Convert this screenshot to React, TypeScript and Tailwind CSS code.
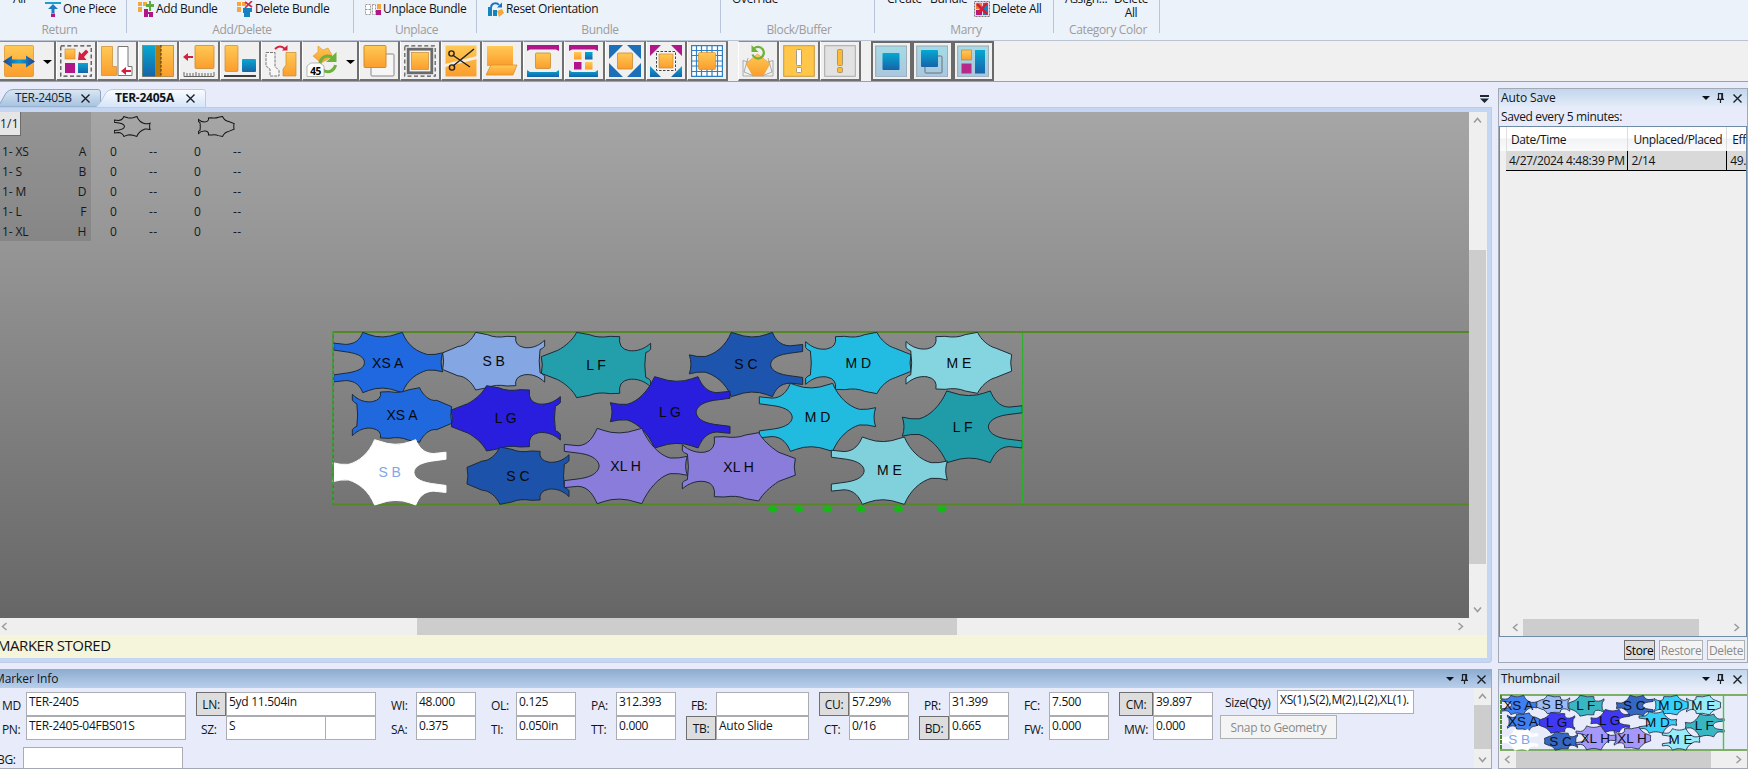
import React from "react";

type Piece = {
  kind: "front" | "back";
  x1: number;
  x2: number;
  y1: number;
  y2: number;
  flip?: boolean;
  label: string;
  fill: string;
  thumb: string;
  text?: string;
  tx: number;
  ty: number;
};

const pieces: Piece[] = [
  { kind: "front", x1: 41, x2: 368, y1: 37, y2: 218, label: "XS A", fill: "#1f68e0", thumb: "#3f7ff0", tx: 203, ty: 129 },
  { kind: "back", x1: 368, x2: 674, y1: 37, y2: 210, flip: true, label: "S B", fill: "#84a6e2", thumb: "#9bbcf8", tx: 521, ty: 123 },
  { kind: "back", x1: 664, x2: 992, y1: 37, y2: 233, flip: true, label: "L F", fill: "#229fab", thumb: "#38b6c2", tx: 828, ty: 135 },
  { kind: "front", x1: 1108, x2: 1448, y1: 37, y2: 230, flip: true, label: "S C", fill: "#1d54ae", thumb: "#3568c4", tx: 1278, ty: 132 },
  { kind: "back", x1: 1457, x2: 1773, y1: 37, y2: 221, label: "M D", fill: "#22bce2", thumb: "#36d0f8", tx: 1615, ty: 129 },
  { kind: "back", x1: 1758, x2: 2075, y1: 37, y2: 220, label: "M E", fill: "#84d5e0", thumb: "#96ecf8", tx: 1917, ty: 129 },
  { kind: "front", x1: 1318, x2: 1667, y1: 190, y2: 394, label: "M D", fill: "#22bbe0", thumb: "#36d0f8", tx: 1493, ty: 291 },
  { kind: "front", x1: 871, x2: 1230, y1: 170, y2: 384, flip: true, label: "L G", fill: "#2a1ede", thumb: "#4038f5", tx: 1050, ty: 276 },
  { kind: "back", x1: 97, x2: 395, y1: 203, y2: 367, label: "XS A", fill: "#1f68de", thumb: "#3f7ff0", tx: 246, ty: 286 },
  { kind: "back", x1: 394, x2: 721, y1: 197, y2: 393, flip: true, label: "L G", fill: "#2a1ede", thumb: "#4038f5", tx: 557, ty: 295 },
  { kind: "front", x1: 1747, x2: 2107, y1: 213, y2: 428, flip: true, label: "L F", fill: "#209ca8", thumb: "#38b6c2", tx: 1928, ty: 321 },
  { kind: "back", x1: 441, x2: 747, y1: 381, y2: 553, flip: true, label: "S C", fill: "#1c52aa", thumb: "#3568c4", tx: 594, ty: 468 },
  { kind: "front", x1: 733, x2: 1102, y1: 325, y2: 551, label: "XL H", fill: "#8a7cda", thumb: "#a598fa", tx: 917, ty: 438 },
  { kind: "back", x1: 1087, x2: 1426, y1: 338, y2: 543, label: "XL H", fill: "#8a7cda", thumb: "#a598fa", tx: 1256, ty: 441 },
  { kind: "front", x1: 1534, x2: 1882, y1: 351, y2: 553, label: "M E", fill: "#80d1dc", thumb: "#96ecf8", tx: 1708, ty: 450 },
  { kind: "front", x1: 38, x2: 378, y1: 359, y2: 555, flip: true, label: "S B", fill: "#ffffff", thumb: "#ffffff", text: "#7fa6ea", tx: 209, ty: 456 },
];

function outline(p: Piece): string {
  const w = p.x2 - p.x1;
  const h = (p.y2 - p.y1) / 2;
  const cy = (p.y1 + p.y2) / 2;
  const at = (fx: number, dy: number) => {
    const x = p.flip ? p.x2 - fx * w : p.x1 + fx * w;
    return `${x.toFixed(1)} ${(cy + dy).toFixed(1)}`;
  };
  if (p.kind === "front") {
    const o = 58 + (h - 90) * 0.3;
    const i = o - 21;
    return [
      `M${at(0, -o)}`,
      `L${at(0.11, -o + 4)} C${at(0.2, -o + 3)} ${at(0.24, -h + 22)} ${at(0.267, -h)}`,
      `Q${at(0.32, -h + 7)} ${at(0.38, -h + 12)} Q${at(0.45, -h + 16)} ${at(0.52, -h + 11)} L${at(0.63, -h)}`,
      `C${at(0.68, -h + 42)} ${at(0.77, -32)} ${at(0.86, -24)} Q${at(0.93, -22)} ${at(1, -29)}`,
      `Q${at(0.972, 0)} ${at(1, 28)} Q${at(0.93, 21)} ${at(0.86, 23)}`,
      `C${at(0.77, 32)} ${at(0.68, h - 42)} ${at(0.63, h)}`,
      `L${at(0.52, h - 11)} Q${at(0.45, h - 16)} ${at(0.38, h - 12)} Q${at(0.32, h - 7)} ${at(0.267, h)}`,
      `C${at(0.24, h - 22)} ${at(0.2, o - 3)} ${at(0.11, o - 4)} L${at(0, o)} L${at(0, i)}`,
      `L${at(0.13, i - 6)} C${at(0.24, i - 12)} ${at(0.28, 15)} ${at(0.283, 0)}`,
      `C${at(0.28, -15)} ${at(0.24, -i + 12)} ${at(0.13, -i + 6)} L${at(0, -i)} Z`,
    ].join(" ");
  }
  const t = 64 + (h - 92) * 0.2;
  const c = h - 13;
  return [
    `M${at(0, -t)}`,
    `C${at(0.06, -t + 18)} ${at(0.13, -t + 25)} ${at(0.2, -t + 22)} Q${at(0.3, -t + 16)} ${at(0.283, -c)}`,
    `L${at(0.37, -c - 1)} Q${at(0.48, -c + 5)} ${at(0.56, -h + 7)} L${at(0.677, -h)}`,
    `C${at(0.71, -h + 22)} ${at(0.78, -h + 42)} ${at(0.85, -44)} L${at(1, -25)}`,
    `Q${at(0.982, 0)} ${at(1, 25)} L${at(0.85, 44)} C${at(0.78, h - 42)} ${at(0.71, h - 22)} ${at(0.677, h)}`,
    `L${at(0.56, h - 7)} Q${at(0.48, c - 5)} ${at(0.37, c + 1)} L${at(0.283, c)}`,
    `Q${at(0.3, t - 16)} ${at(0.2, t - 22)} C${at(0.13, t - 25)} ${at(0.06, t - 18)} ${at(0, t)}`,
    `L${at(0, t - 18)} Q${at(0.02, t - 26)} ${at(0.045, t - 28)} Q${at(0.062, 0)} ${at(0.045, -t + 28)}`,
    `Q${at(0.02, -t + 26)} ${at(0, -t + 18)} Z`,
  ].join(" ");
}

const ticks = [1358, 1436, 1522, 1622, 1735, 1865];

function Marker() {
  return (
    <svg className="block h-[506px] w-[1469px]" viewBox="0 0 1469 506">
      <g transform="translate(320 208) scale(0.33333)">
        <path d="M38 36H3500M38 553.5H3500" stroke="#558725" strokeWidth="6" />
        {pieces.map((p, i) => (
          <path key={i} d={outline(p)} fill={p.fill} stroke={p.text ? "#ffffff" : "#1b2733"} strokeWidth="2.9" />
        ))}
        <path d="M39.5 36V553" stroke="#4a7a28" strokeWidth="4" />
        <path d="M39.5 36V553" stroke="#2bb02b" strokeWidth="5" strokeDasharray="10 8" />
        <path d="M2108 38V553" stroke="#1dbb1d" strokeWidth="3" />
        {ticks.map((x) => (
          <path key={x} d={`M${x - 16} 567l8 -8h6v-4h5v4h6l8 8l-8 8h-5v3h-6v-3h-6z`} fill="#16b816" />
        ))}
        {pieces.map((p, i) => (
          <text key={i} x={p.tx} y={p.ty + 15} textAnchor="middle" fontSize="42" fill={p.text ?? "#06080c"} className="font-['Liberation_Sans',sans-serif] tracking-normal">
            {p.label}
          </text>
        ))}
      </g>
    </svg>
  );
}

function Thumbnail() {
  return (
    <svg className="block h-[57px] w-[247px]" viewBox="0 0 247 57">
      <path d="M0 1H247M0 56H247" stroke="#5b9a35" strokeWidth="1.400" />
      <g transform="translate(-3 -2.6) scale(0.1078 0.1062)">
        {pieces.map((p, i) => (
          <path key={i} d={outline(p)} fill={p.thumb} stroke={p.text ? "#ffffff" : "#223046"} strokeWidth="8" />
        ))}
      </g>
      <path d="M1 1V56" stroke="#4b8a2b" strokeWidth="2" strokeDasharray="4 1" />
      <path d="M223.5 1V56" stroke="#3ecb3e" strokeWidth="1.400" />
      {pieces.map((p, i) => (
        <text key={i} x={p.tx * 0.1078 - 3.5} y={p.ty * 0.1062 + 2} textAnchor="middle" fontSize="13.500" fill={p.text ?? "#0a0f1c"} className="font-['Liberation_Sans',sans-serif] tracking-normal">
          {p.label}
        </text>
      ))}
    </svg>
  );
}

const G = "url(#gold)";
const B = "url(#teal)";
const P = "#b0168a";

const icons: Record<string, React.ReactNode> = {
  spread: (
    <>
      <rect x="1.500" y=".5" width="29" height="31" rx="1" fill={G} stroke="#d98f2b" strokeWidth=".7" />
      <path d="M0 16.500l9-6v4h14v-4l9 6-9 6v-4H9v4z" fill="url(#arrow)" />
    </>
  ),
  gather: (
    <>
      <rect x=".8" y=".8" width="30.400" height="30.400" fill="none" stroke="#444" strokeWidth="1.200" strokeDasharray="4 2.500" />
      <rect x="5" y="4" width="10" height="10" fill={G} stroke="#c98a30" strokeWidth=".6" />
      <rect x="5" y="18" width="10" height="10" fill={P} />
      <rect x="18" y="18" width="10" height="10" fill={B} />
      <path d="M26 4.500l-4.500 4.500-2.500-2.500-1 8.500h8.500l-2.500-3 4.500-5z" fill="#d3203f" />
    </>
  ),
  join: (
    <>
      <path d="M.5 1.500h11v20h4v9H.5z" fill={G} stroke="#c98a30" strokeWidth=".7" />
      <path d="M17 1.500h10v20h4v9H17z" fill="#fff" stroke="#777" />
      <path d="M20 26l5-4v3h5v2h-5v3z" fill="#d3203f" />
    </>
  ),
  fold: (
    <>
      <rect x=".5" y=".5" width="31" height="31" fill={G} stroke="#a77a35" strokeWidth=".7" />
      <rect x=".5" y=".5" width="13" height="31" fill={B} />
      <rect x="13.500" y=".5" width="5.500" height="31" fill="#b97a08" />
      <path d="M19 0v32" stroke="#333" strokeDasharray="2.500 1.500" />
    </>
  ),
  measure: (
    <>
      <rect x="12" y=".5" width="19" height="23" rx="1" fill={G} stroke="#c98a30" strokeWidth=".8" />
      <path d="M0 12l5-4v3h5v2H5v3z" fill="#d3203f" />
      <path d="M1 27v4.500h30V27M4 28v3M7 28v3M10 28v3M13 27v4M16 28v3M19 28v3M22 28v3M25 28v3M28 28v3" fill="none" stroke="#555" strokeWidth=".9" />
    </>
  ),
  align: (
    <>
      <rect x="1" y=".5" width="13" height="26" rx="1" fill={G} stroke="#c98a30" strokeWidth=".7" />
      <rect x="18" y="14" width="14" height="13" rx="1" fill={B} />
      <path d="M0 31h32" stroke="#111" strokeWidth="1.600" />
    </>
  ),
  flip: (
    <>
      <path d="M1 7.500h9v14l4 4v5.500H5v-7l-4-3z" fill="#f7f7f7" stroke="#777" strokeDasharray="3 1" />
      <path d="M21 7.500h10v23.500H18v-7l3-4z" fill={G} stroke="#c98a30" strokeWidth=".7" />
      <path d="M10 4q5-5 10 0" fill="none" stroke="#d3203f" strokeWidth="2" />
      <path d="M17 5.500h5.500V0z" fill="#d3203f" />
    </>
  ),
  rotate: (
    <>
      <path d="M12 1l5 4 5-2 4 7-4 4-7 4-8-7 5-4z" fill={G} stroke="#d9932f" strokeWidth=".6" />
      <path d="M27.500 13.500A7.800 7.800 0 1 0 29.500 20" fill="none" stroke="#6fb23b" strokeWidth="3" />
      <path d="M20 17h10.500V7z" fill="#6fb23b" />
      <path d="M1 21l4-3h9l4 3v10.500H1z" fill="#fff" stroke="#999" strokeWidth=".7" />
      <text x="9.500" y="30" textAnchor="middle" fontSize="10" fontWeight="700" className="font-['Open_Sans',sans-serif]">45</text>
    </>
  ),
  layers: (
    <>
      <rect x="8" y="9" width="23" height="22" rx="1" fill="#f6f6f6" stroke="#888" />
      <rect x="1" y=".5" width="22" height="22" rx="1" fill={G} stroke="#d18c2c" />
    </>
  ),
  block: (
    <>
      <rect x=".8" y=".8" width="30.400" height="30.400" fill="none" stroke="#555" strokeWidth="1.200" strokeDasharray="4 2.500" />
      <rect x="4.200" y="4.200" width="23.600" height="23.600" fill="#f4f4f4" stroke="#6a6a6a" strokeWidth="2.800" />
      <rect x="7.500" y="7.500" width="17" height="17" fill={G} stroke="#c98a30" strokeWidth=".7" />
    </>
  ),
  cut: (
    <>
      <rect x=".5" y=".5" width="31" height="31" fill={G} />
      <path d="M0 19L32 11V14L0 22z" fill="#f7efe2" />
      <path d="M8 21L29 4M7.500 10L25 22" stroke="#222" strokeWidth="1.500" />
      <circle cx="6.500" cy="8.500" r="2.600" fill="none" stroke="#222" strokeWidth="1.400" />
      <circle cx="7" cy="22.500" r="2.600" fill="none" stroke="#222" strokeWidth="1.400" />
    </>
  ),
  tray: (
    <>
      <rect x="1" y="1" width="26" height="20" fill={G} />
      <path d="M5 20h26l-4 10H0z" fill={G} stroke="#d98f2b" strokeWidth=".8" />
    </>
  ),
  stack: (
    <>
      <path d="M0 0h32v6l-3-1.500H3L0 6z" fill={P} />
      <rect x="8.500" y="8" width="15" height="15.500" rx="1" fill={G} stroke="#c98a30" strokeWidth=".8" />
      <path d="M0 32h32v-7l-3 2H3l-3-2z" fill={B} />
    </>
  ),
  stackFour: (
    <>
      <path d="M1 0h29v6l-3-1.500H4L1 6z" fill={P} />
      <path d="M1 32h29v-7l-3 2H4l-3-2z" fill={B} />
      <rect x="6" y="7" width="7.500" height="7.500" fill={G} />
      <rect x="17" y="7" width="7.500" height="7.500" fill={B} />
      <rect x="6" y="17" width="7.500" height="7.500" fill={P} />
      <rect x="17" y="17" width="7.500" height="7.500" fill={G} />
    </>
  ),
  corners: (
    <>
      <path d="M0 0h14L0 14zM32 0v14L18 0zM0 32V18l14 14zM32 32H18l14-14z" fill="#1d6fb8" />
      <rect x="8.500" y="8" width="15" height="16" rx="1" fill={G} stroke="#c98a30" strokeWidth=".8" />
    </>
  ),
  cornersBlock: (
    <>
      <path d="M0 0h11L0 11zM32 0v11L21 0z" fill={P} />
      <path d="M0 32V21l11 11zM32 32H21l11-11z" fill={B} />
      <rect x="6.500" y="6.500" width="19" height="19" fill="#f4f4f4" stroke="#444" strokeDasharray="2.500 1.500" />
      <rect x="9" y="9" width="14" height="14" fill={G} stroke="#c98a30" strokeWidth=".7" />
    </>
  ),
  grid: (
    <>
      <path d="M.6 .6H31.400V31.400H.6zM5.500 0v32M10.500 0v32M16 0v32M21 0v32M26.500 0v32M0 5.500h32M0 10.500h32M0 16h32M0 21h32M0 26.500h32" fill="#fff" stroke="#2f7fc4" strokeWidth="1.200" />
      <rect x="7.500" y="7.500" width="17" height="17" rx="1" fill={G} stroke="#d98f2b" strokeWidth=".7" />
    </>
  ),
  renew: (
    <>
      <path d="M1 15.500l5 1.500M31 15.500l-5 1.500M1 15.500V31h30V15.500M6 13L2 27l10 4M26 13l4 14-10 4" fill="none" stroke="#999" strokeWidth=".8" />
      <path d="M15.500 9L4 18.500 11 31h10l7-12.500z" fill={G} stroke="#e09a33" strokeWidth=".6" />
      <path d="M12 3.500a5.800 5.800 0 1 1-1.500 6" fill="none" stroke="#6fb23b" strokeWidth="2.300" />
      <path d="M9.500 0v7h7z" fill="#6fb23b" />
    </>
  ),
  alert: (
    <>
      <rect x=".7" y=".7" width="30.600" height="30.600" fill="#ffc64a" stroke="#c99a3c" />
      <rect x="13.500" y="4.500" width="5" height="16" rx="1" fill="#fff" stroke="#8a8a8a" strokeWidth=".8" />
      <rect x="13.500" y="22.500" width="5" height="5" rx="1" fill="#fff" stroke="#8a8a8a" strokeWidth=".8" />
    </>
  ),
  alertOff: (
    <>
      <rect x=".7" y=".7" width="30.600" height="30.600" fill="#e2e2e2" stroke="#a8a8a8" />
      <rect x="13.500" y="4.500" width="5" height="16" rx="1" fill="#fdbb35" stroke="#9a8a6a" strokeWidth=".8" />
      <rect x="13.500" y="22.500" width="5" height="5" rx="1" fill="#fdbb35" stroke="#9a8a6a" strokeWidth=".8" />
    </>
  ),
  solid: (
    <>
      <rect x=".7" y="1" width="31" height="31" fill="url(#ice)" stroke="#9aa3aa" />
      <rect x="7.500" y="8" width="17" height="17" rx="1" fill={B} />
    </>
  ),
  overlap: (
    <>
      <rect x=".7" y="1" width="31" height="31" fill="url(#ice)" stroke="#9aa3aa" />
      <rect x="9" y="11" width="17" height="17" rx="1" fill="none" stroke="#66707a" />
      <rect x="5" y="5" width="17" height="17" rx="1" fill={B} />
    </>
  ),
  mixed: (
    <>
      <rect x=".7" y="1" width="31" height="31" fill="url(#ice)" stroke="#9aa3aa" />
      <rect x="4.500" y="5" width="10" height="10" fill={G} stroke="#a78a50" strokeWidth=".7" />
      <rect x="4.500" y="18.500" width="10" height="10" fill="#b52a88" />
      <rect x="18" y="5" width="10" height="23.500" fill={B} />
    </>
  ),
};

function Defs() {
  return (
    <svg className="absolute h-0 w-0">
      <defs>
        <linearGradient id="gold" x1="0" y1="0" x2="0" y2="1">
          <stop offset="0" stopColor="#ffc955" />
          <stop offset="1" stopColor="#fb9d2c" />
        </linearGradient>
        <linearGradient id="teal" x1="0" y1="0" x2="0" y2="1">
          <stop offset="0" stopColor="#06a8d2" />
          <stop offset="1" stopColor="#1763a8" />
        </linearGradient>
        <linearGradient id="arrow" x1="0" y1="0" x2="1" y2="0">
          <stop offset="0" stopColor="#1f3f93" />
          <stop offset=".5" stopColor="#109fd0" />
          <stop offset="1" stopColor="#1f3f93" />
        </linearGradient>
        <linearGradient id="ice" x1="0" y1="0" x2="0" y2="1">
          <stop offset="0" stopColor="#a6dbe6" />
          <stop offset="1" stopColor="#aac6de" />
        </linearGradient>
      </defs>
    </svg>
  );
}

function Tool({ name, menu, on }: { name: string; menu?: boolean; on?: boolean }) {
  return (
    <div
      className={
        (menu ? "w-[57px] " : "w-[41px] ") +
        (on ? "border-2 border-[#6a6a6a] pl-[2px] pt-[2px] " : "border-b-2 border-l border-r-2 border-t border-b-[#707070] border-l-[#fff] border-r-[#707070] border-t-[#8c8c8c] pl-[3px] pt-[3px] ") +
        "flex h-[40px] shrink-0 items-start bg-[#f0f0f0]"
      }
    >
      <svg className="h-8 w-8 shrink-0" viewBox="0 0 32 32">{icons[name]}</svg>
      {menu && (
        <svg className="ml-[8px] mt-[15px] h-1 w-[9px]" viewBox="0 0 9 4">
          <path d="M0 0h9L4.500 4z" />
        </svg>
      )}
    </div>
  );
}

function Group({ width, label, labelClass = "", children }: { width: string; label: string; labelClass?: string; children?: React.ReactNode }) {
  return (
    <div className={`${width} h-[33px] shrink-0 border-r border-[#b9c6da]`}>
      <div className="flex h-[18px] items-center whitespace-nowrap">{children}</div>
      <div className={`pt-[2px] text-center leading-[20px] text-[#9c9c9c] ${labelClass}`}>{label}</div>
    </div>
  );
}

function Glyph({ kind }: { kind: "up" | "add" | "del" | "unplace" | "reset" | "delAll" }) {
  return (
    <svg className="h-4 w-4 shrink-0" viewBox="0 0 16 16">
      {kind === "up" && (
        <>
          <path d="M0 1h16v2H0z" fill="#1c9fd0" />
          <path d="M8 3l5 5h-3.500v4h-3V8H3z" fill="#1d7cc0" />
          <path d="M6 12.500h4V16H6z" fill={P} />
        </>
      )}
      {kind === "add" && (
        <>
          <path d="M0 1h4v4H0zM5 1h4v4H5zM0 6h4v5H0z" fill="#f6a738" />
          <path d="M6 8h4v3h5v5h-4v-3h-1v3H6z" fill={P} />
          <path d="M11 0h2v3h3v3h-3v4h-2V6H8V3h3z" fill="#5cad3f" />
        </>
      )}
      {kind === "del" && (
        <>
          <path d="M0 1h4v4H0zM5 1h4v4H5zM0 6h4v5H0z" fill="#f6a738" />
          <path d="M6 7h9v4h-2v5H7v-4H6z" fill="#1583bd" />
          <path d="M8 1l7 5M15 0L8 7" stroke="#d8263c" strokeWidth="1.700" />
        </>
      )}
      {kind === "unplace" && (
        <>
          <path d="M.5 3.500h5v10h-5zM7.500 3.500h3v10h-3zM.5 8.500h5" fill="#fff" stroke="#999" strokeDasharray="2 1" />
          <path d="M12 3h4v5h-4z" fill="#f6a738" />
          <path d="M11 9h5v5h-5z" fill={P} />
        </>
      )}
      {kind === "reset" && (
        <>
          <path d="M0 6h4v9H0zM5 9h4v6H5z" fill="#1583bd" />
          <path d="M3 6a4.500 4.500 0 0 1 8-2" stroke="#1b74bb" strokeWidth="2" fill="none" />
          <path d="M9 6.500h5V1.500z" fill="#1b74bb" />
          <path d="M9 10l5-2 2 4-5 4z" fill="#f6a738" />
        </>
      )}
      {kind === "delAll" && (
        <>
          <rect x=".5" y=".5" width="15" height="15" fill="#e7d7e8" stroke="#777" strokeDasharray="2 1" />
          <path d="M2 2h6v6H2z" fill="#f07d35" />
          <path d="M9 2h5v12H9z" fill="#1583bd" />
          <path d="M2 9h6v5H2z" fill={P} />
          <path d="M3 3l10 10M13 2L3 13" stroke="#d11f38" strokeWidth="2.600" />
        </>
      )}
    </svg>
  );
}

function Ribbon() {
  return (
    <div className="flex h-[41px] w-[1748px] overflow-hidden border-b border-[#b9c3d3] bg-[#ecf2fa]">
      <Group width="w-[127px]" label="Return" labelClass="pr-[7px]">
        <span className="-mt-[20px] ml-[13px] w-[32px]">All</span>
        <Glyph kind="up" />
        <span className="ml-[2px]">One Piece</span>
      </Group>
      <Group width="w-[227px]" label="Add/Delete" labelClass="pl-[4px]">
        <span className="ml-[11px] flex"><Glyph kind="add" /></span>
        <span className="ml-[2px] w-[81px]">Add Bundle</span>
        <Glyph kind="del" />
        <span className="ml-[2px]">Delete Bundle</span>
      </Group>
      <Group width="w-[123px]" label="Unplace" labelClass="pl-[3px]">
        <span className="ml-[11px] flex"><Glyph kind="unplace" /></span>
        <span className="ml-[2px]">Unplace Bundle</span>
      </Group>
      <Group width="w-[244px]" label="Bundle" labelClass="pl-[3px]">
        <span className="ml-[11px] flex"><Glyph kind="reset" /></span>
        <span className="ml-[2px]">Reset Orientation</span>
      </Group>
      <Group width="w-[154px]" label="Block/Buffer" labelClass="pl-[3px]">
        <span className="-mt-[20px] ml-[11px]">Override</span>
      </Group>
      <Group width="w-[179px]" label="Marry" labelClass="pl-[4px]">
        <span className="-mt-[20px] ml-[12px] w-[43px]">Create</span>
        <span className="-mt-[20px] w-[44px]">Bundle</span>
        <Glyph kind="delAll" />
        <span className="ml-[2px]">Delete All</span>
      </Group>
      <Group width="w-[106px]" label="Category Color" labelClass="pl-[3px]">
        <span className="-mt-[20px] ml-[11px] w-[42px]">Assign...</span>
        <span className="-mt-[6px] flex w-[48px] flex-col text-center leading-[14px]">
          <span>Delete</span>
          <span>All</span>
        </span>
      </Group>
    </div>
  );
}

function Cross({ className = "" }: { className?: string }) {
  return (
    <svg className={`h-[9px] w-[9px] shrink-0 ${className}`} viewBox="0 0 9 9">
      <path d="M.5 .5l8 8M8.500 .5l-8 8" stroke="#1a1f28" strokeWidth="1.400" />
    </svg>
  );
}

function Tabs() {
  return (
    <div className="flex h-[25px] w-[1492px] items-end bg-[#e8ecfa] pr-[3px]">
      <div className="relative flex h-[18px] w-[206px] shrink-0 items-center">
        <svg className="absolute left-0 top-0 h-[18px] w-[206px]" viewBox="0 0 206 18">
          <defs>
            <linearGradient id="tabOff" x1="0" y1="0" x2="0" y2="1">
              <stop offset="0" stopColor="#dbe7f3" />
              <stop offset="1" stopColor="#a5c2de" />
            </linearGradient>
            <linearGradient id="tabOn" x1="0" y1="0" x2="0" y2="1">
              <stop offset="0" stopColor="#fbfdff" />
              <stop offset="1" stopColor="#d4e4f8" />
            </linearGradient>
          </defs>
          <path d="M-2 18L6 4Q9 .5 13 .5H98Q100.500 .5 100.500 3V18z" fill="url(#tabOff)" stroke="#8ba4c4" />
          <path d="M96 18.500Q101 14 104 7T114 .5H203Q205.500 .5 205.500 3V18.500z" fill="url(#tabOn)" stroke="#b9cbe6" />
        </svg>
        <span className="relative ml-[15px] w-[66px] text-[#1b2430]">TER-2405B</span>
        <Cross className="relative" />
        <span className="relative ml-[25px] w-[71px] font-bold tracking-[-0.25px]">TER-2405A</span>
        <Cross className="relative" />
      </div>
      <div className="grow" />
      <svg className="mb-[4px] h-[8px] w-[9px]" viewBox="0 0 9 8">
        <path d="M0 0h9v2H0zM0 3.500h9L4.500 8z" fill="#1f2733" />
      </svg>
    </div>
  );
}

function Chevron({ dir }: { dir: "up" | "down" | "left" | "right" }) {
  const d = { up: "M1 6.500l3.500-4 3.500 4", down: "M1 2.500l3.500 4 3.500-4", left: "M6.500 1L2.500 4.500l4 3.500", right: "M2.500 1l4 3.500-4 3.500" }[dir];
  return (
    <svg className="h-[9px] w-[9px] shrink-0" viewBox="0 0 9 9">
      <path d={d} fill="none" stroke="#9b9b9b" strokeWidth="1.500" />
    </svg>
  );
}

const rows = [
  ["1- XS", "A"],
  ["1- S", "B"],
  ["1- M", "D"],
  ["1- L", "F"],
  ["1- XL", "H"],
];

const sketches: Piece[] = [pieces[0], pieces[4]];

function SizeTable() {
  return (
    <div className="absolute left-0 top-0 flex text-[#15181c]">
      <div className="h-[129px] w-[91px] bg-black/10">
        <div className="flex h-[24px] w-[21px] items-center border-b border-r border-[#6c6c6c] bg-[#e6e6e6] tracking-[0.2px]">1/1</div>
        <div className="mt-[6px]">
          {rows.map(([size, code]) => (
            <div key={size} className="flex h-[20px] items-center justify-between pl-[2px] pr-[5px]">
              <span className="tracking-[-0.1px]">{size}</span>
              <span>{code}</span>
            </div>
          ))}
        </div>
      </div>
      {sketches.map((p, n) => (
        <div key={n} className="w-[84px] pl-[19px]">
          <svg className="ml-[4px] mt-[4px] block h-[21px] w-[37px]" viewBox="0 0 330 185">
            <path d={outline({ ...p, x1: 3, x2: 322, y1: 3, y2: 181, flip: false })} fill="none" stroke="#151515" strokeWidth="9" />
          </svg>
          <div className="mt-[5px]">
            {rows.map(([size]) => (
              <div key={size} className="flex h-[20px] items-center">
                <span className="w-[39px]">0</span>
                <span className="tracking-[0.5px]">--</span>
              </div>
            ))}
          </div>
        </div>
      ))}
    </div>
  );
}

function Canvas() {
  return (
    <div className="h-[556px] w-[1492px] rounded-br border-b border-r border-t border-[#bccbe6] bg-[#c5d6f3] pt-[4px]">
      <div className="h-[546px] w-[1487px] bg-[#efefef]">
        <div className="flex h-[506px]">
          <div className="relative w-[1469px] bg-[linear-gradient(#a6a6a6,#666666)]">
            <Marker />
            <SizeTable />
          </div>
          <div className="flex w-[17px] flex-col items-center bg-[#efefef]">
            <div className="flex h-[17px] items-center"><Chevron dir="up" /></div>
            <div className="mt-[121px] h-[314px] w-[17px] bg-[#cdcdcd]" />
            <div className="mt-auto flex h-[17px] items-center"><Chevron dir="down" /></div>
          </div>
        </div>
        <div className="flex h-[17px] w-[1469px] items-center bg-[#efefef] pr-[4px]">
          <Chevron dir="left" />
          <div className="ml-[408px] h-[17px] w-[540px] bg-[#cdcdcd]" />
          <div className="grow" />
          <Chevron dir="right" />
        </div>
        <div className="h-[23px] bg-[#f5f5dc]">
          <div className="-ml-[3px] text-[15px] leading-[20px] tracking-[-0.45px]">MARKER STORED</div>
        </div>
      </div>
    </div>
  );
}

function PanelHead({ title, active }: { title: string; active?: boolean }) {
  return (
    <div
      className={
        "flex h-[18px] shrink-0 items-center pr-[5px] " +
        (active ? "bg-[linear-gradient(#8eadd2,#b9cfea)]" : "bg-[linear-gradient(#c2d6ec,#e4ecf9)]")
      }
    >
      <span className={active ? "-ml-[6px] tracking-[-0.1px]" : "ml-[2px] tracking-[-0.1px]"}>{title}</span>
      <div className="grow" />
      <svg className="h-1 w-[8px]" viewBox="0 0 8 4"><path d="M0 0h8L4 4z" fill="#0d1218" /></svg>
      <svg className="ml-[7px] h-[10px] w-[7px]" viewBox="0 0 7 10">
        <path d="M1.500 6V.7h4V6M0 6.300h7M3.500 6v4M4.800 1v5" fill="none" stroke="#1a1f28" strokeWidth="1.200" />
      </svg>
      <Cross className="ml-[9px]" />
    </div>
  );
}

type Field = { label: string; value: string; button?: boolean; split?: boolean };
const fieldBlocks: { lab: string; box: string; fields: Field[] }[] = [
  { lab: "w-[26px]", box: "w-[160px]", fields: [{ label: "MD", value: "TER-2405" }, { label: "PN:", value: "TER-2405-04FBS01S" }] },
  { lab: "w-[30px]", box: "w-[150px]", fields: [{ label: "LN:", value: "5yd 11.504in", button: true }, { label: "SZ:", value: "S", split: true }] },
  { lab: "w-[30px]", box: "w-[60px]", fields: [{ label: "WI:", value: "48.000" }, { label: "SA:", value: "0.375" }] },
  { lab: "w-[30px]", box: "w-[60px]", fields: [{ label: "OL:", value: "0.125" }, { label: "TI:", value: "0.050in" }] },
  { lab: "w-[30px]", box: "w-[60px]", fields: [{ label: "PA:", value: "312.393" }, { label: "TT:", value: "0.000" }] },
  { lab: "w-[30px]", box: "w-[93px]", fields: [{ label: "FB:", value: "" }, { label: "TB:", value: "Auto Slide", button: true }] },
  { lab: "w-[30px]", box: "w-[60px]", fields: [{ label: "CU:", value: "57.29%", button: true }, { label: "CT:", value: "0/16" }] },
  { lab: "w-[30px]", box: "w-[60px]", fields: [{ label: "PR:", value: "31.399" }, { label: "BD:", value: "0.665", button: true }] },
  { lab: "w-[30px]", box: "w-[60px]", fields: [{ label: "FC:", value: "7.500" }, { label: "FW:", value: "0.000" }] },
  { lab: "w-[34px]", box: "w-[60px]", fields: [{ label: "CM:", value: "39.897", button: true }, { label: "MW:", value: "0.000" }] },
];

function MarkerInfo() {
  return (
    <div className="flex h-[100px] w-[1492px] flex-col overflow-hidden border-b border-r border-t border-[#a2a8b4] bg-[#e8ecfa]">
      <PanelHead title="Marker Info" active />
      <div className="flex h-[80px]">
        <div className="w-[1474px] pt-[4px]">
          <div className="flex gap-[10px]">
            {fieldBlocks.map((b, i) => (
              <div key={i}>
                {b.fields.map((f) => (
                  <div key={f.label} className="flex h-[24px]">
                    <div
                      className={
                        b.lab +
                        " shrink-0 whitespace-nowrap " +
                        (f.button ? "border border-[#707070] bg-[#dddddd] pt-[2px] text-center leading-[20px]" : (i === 0 ? "pl-[2px]" : "pl-[5px]") + " pt-[4px] leading-[20px]")
                      }
                    >
                      {f.label}
                    </div>
                    <div className={b.box + " flex border border-[#abadb3] bg-white pl-[2px] leading-[18px] tracking-[-0.28px]"}>
                      {f.value}
                      {f.split && <div className="ml-auto mr-[49px] w-px bg-[#abadb3]" />}
                    </div>
                  </div>
                ))}
              </div>
            ))}
            <div className="-ml-[3px] -mt-[2px]">
              <div className="flex h-[24px]">
                <span className="w-[57px] pl-[5px] leading-[26px]">Size(Qty)</span>
                <div className="w-[137px] whitespace-nowrap border border-[#abadb3] bg-white pl-[2px] leading-[18px] tracking-[-0.25px]">XS(1),S(2),M(2),L(2),XL(1).</div>
              </div>
              <div className="mt-px h-[24px] w-[117px] border border-[#adb2b5] bg-[#f4f4f4] text-center leading-[24px] text-[#8a8a8a]">Snap to Geometry</div>
            </div>
          </div>
          <div className="mt-[7px] flex h-[21px]">
            <span className="-ml-[3px] w-[26px] leading-[26px]">BG:</span>
            <div className="w-[160px] border border-b-0 border-[#abadb3] bg-white" />
          </div>
        </div>
        <div className="flex w-[17px] flex-col items-center bg-[#efefef]">
          <div className="flex h-[17px] items-center"><Chevron dir="up" /></div>
          <div className="h-[44px] w-[17px] bg-[#cdcdcd]" />
          <div className="mt-auto flex h-[17px] items-center"><Chevron dir="down" /></div>
        </div>
      </div>
    </div>
  );
}

function AutoSave() {
  return (
    <div className="flex h-[575px] w-[250px] flex-col border border-[#a2a8b4] bg-[#e8ecfa]">
      <PanelHead title="Auto Save" />
      <div className="h-[19px] pl-[2px] leading-[19px]">Saved every 5 minutes:</div>
      <div className="flex h-[511px] w-[248px] flex-col overflow-hidden border border-[#6f8ba6] bg-[#efefef]">
        <div className="flex h-[24px] shrink-0 bg-[linear-gradient(#ffffff_45%,#f2f3f6_50%,#fbfbfc)] leading-[25px]">
          <div className="w-[7px] border-r border-[#e0e0e0]" />
          <div className="w-[123px] border-r border-[#dcdcdc] pl-[4px]">Date/Time</div>
          <div className="w-[100px] border-r border-[#dcdcdc] pl-[5px]">Unplaced/Placed</div>
          <div className="pl-[5px]">Eff</div>
        </div>
        <div className="ml-[6px] flex h-[20px] shrink-0 whitespace-nowrap border-b border-black bg-[#d9d9d9] leading-[19px]">
          <div className="w-[124px] border-r border-black pl-[3px] tracking-[-0.3px]">4/27/2024 4:48:39 PM</div>
          <div className="w-[100px] border-r border-black pl-[3px]">2/14</div>
          <div className="pl-[3px]">49.</div>
        </div>
        <div className="mt-auto flex h-[17px] items-center pl-[11px] pr-[5px]">
          <Chevron dir="left" />
          <div className="ml-[3px] h-[17px] w-[176px] bg-[#cdcdcd]" />
          <div className="grow" />
          <Chevron dir="right" />
        </div>
      </div>
      <div className="flex justify-end gap-[4px] pr-[2px] pt-[3px] text-center leading-[19px]">
        <div className="h-[20px] w-[31px] border border-[#707070] bg-[#dddddd] text-black">Store</div>
        <div className="h-[20px] w-[44px] border border-[#adb2b5] bg-[#f4f4f4] text-[#8a8a8a]">Restore</div>
        <div className="h-[20px] w-[38px] border border-[#adb2b5] bg-[#f4f4f4] text-[#8a8a8a]">Delete</div>
      </div>
    </div>
  );
}

function ThumbnailPanel() {
  return (
    <div className="flex h-[100px] w-[250px] flex-col border border-[#a2a8b4] bg-[#e8ecfa]">
      <PanelHead title="Thumbnail" />
      <div className="mt-[6px] pl-px"><Thumbnail /></div>
      <div className="flex h-[17px] items-center bg-[#efefef] pl-[4px] pr-[4px]">
        <Chevron dir="left" />
        <div className="ml-[4px] h-[17px] w-[195px] bg-[#cdcdcd]" />
        <div className="grow" />
        <Chevron dir="right" />
      </div>
    </div>
  );
}

export default function App() {
  return (
    <div className="h-[772px] w-[1753px] overflow-hidden bg-white font-['Open_Sans','Noto_Sans',sans-serif] text-[12px] tracking-[-0.35px] text-[#111418]">
      <Defs />
      <Ribbon />
      <div className="flex h-[41px] w-[1748px] border-b border-[#a0a0a0] bg-[#f0f0f0]">
        <div className="-ml-px flex">
          <Tool name="spread" menu />
          <Tool name="gather" />
          <Tool name="join" />
          <Tool name="fold" />
          <Tool name="measure" />
          <Tool name="align" />
          <Tool name="flip" />
          <Tool name="rotate" menu />
          <Tool name="layers" />
          <Tool name="block" />
          <Tool name="cut" />
          <Tool name="tray" />
          <Tool name="stack" />
          <Tool name="stackFour" />
          <Tool name="corners" />
          <Tool name="cornersBlock" />
          <Tool name="grid" />
        </div>
        <div className="ml-[10px] flex">
          <Tool name="renew" />
          <Tool name="alert" />
          <Tool name="alertOff" />
        </div>
        <div className="ml-[10px] flex">
          <Tool name="solid" on />
          <Tool name="overlap" on />
          <Tool name="mixed" on />
        </div>
      </div>
      <div className="flex h-[687px] w-[1748px] bg-[#e8ecfa]">
        <div className="w-[1492px]">
          <Tabs />
          <Canvas />
          <div className="mt-[6px]"><MarkerInfo /></div>
        </div>
        <div className="ml-[6px] pt-[6px]">
          <AutoSave />
          <div className="mt-[6px]"><ThumbnailPanel /></div>
        </div>
      </div>
    </div>
  );
}
